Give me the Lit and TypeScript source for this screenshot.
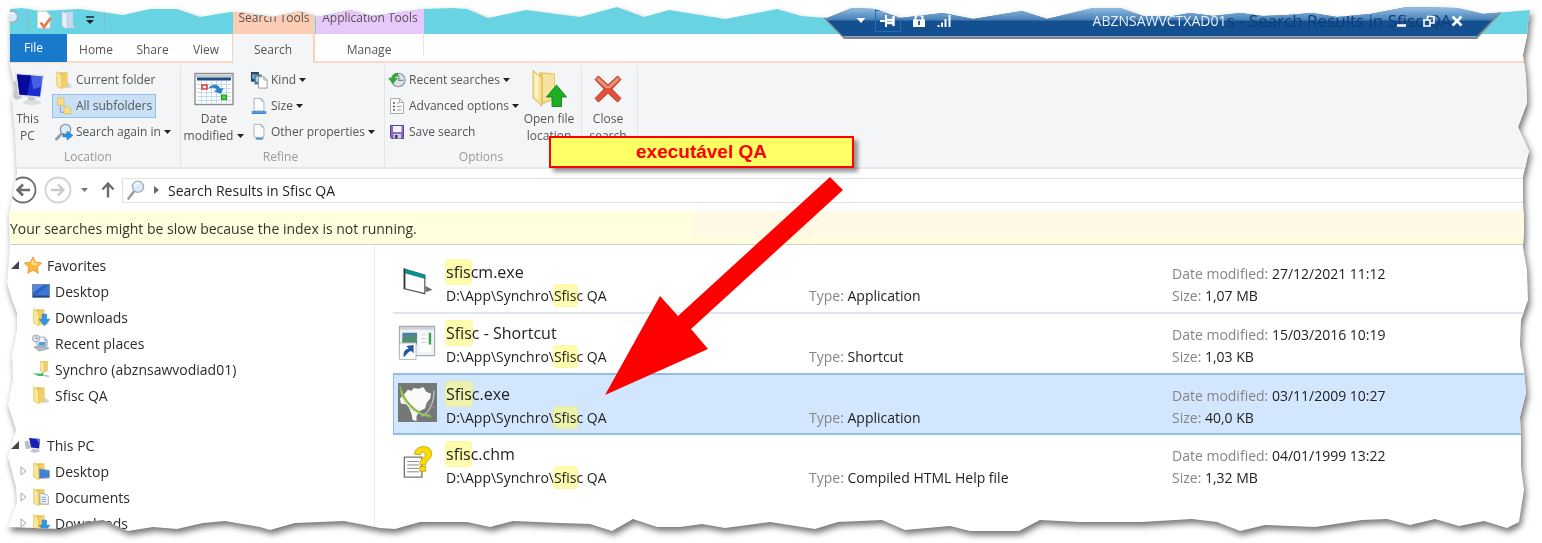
import { LitElement, html, svg, css, unsafeCSS } from "lit";
import { customElement, property } from "lit/decorators.js";
import { classMap } from "lit/directives/class-map.js";

/* Outline of the torn sheet, clockwise from the top left corner. */
const TEAR: Array<[number, number]> = [
  [10, 9], [22, 8], [40, 11], [80, 9], [123, 15], [150, 9], [177, 9], [200, 17], [230, 12], [240, 12],
  [273, 17], [300, 11], [317, 17], [350, 10], [372, 16], [423, 9], [452, 8], [467, 9], [488, 18], [526, 10],
  [580, 17], [617, 7], [644, 17], [669, 10], [725, 19], [777, 9], [801, 16], [827, 18], [852, 8], [875, 9],
  [900, 18], [943, 13], [973, 19], [1022, 11], [1047, 19], [1093, 8], [1120, 8], [1143, 16], [1173, 16],
  [1190, 13], [1213, 16], [1240, 13], [1263, 16], [1287, 15], [1312, 13], [1337, 17], [1370, 14], [1407, 7],
  [1457, 8], [1483, 14], [1530, 10], [1528, 23], [1527, 37], [1523, 55], [1526, 77], [1527, 103], [1518, 127],
  [1529, 151], [1523, 177], [1523, 200], [1524, 227], [1523, 247], [1527, 270], [1528, 300], [1521, 320],
  [1520, 345], [1524, 370], [1526, 393], [1520, 417], [1521, 437], [1521, 467], [1524, 490], [1519, 522],
  [1507, 528], [1484, 521], [1459, 526], [1435, 519], [1410, 525], [1387, 519], [1362, 520], [1315, 527],
  [1265, 525], [1240, 531], [1217, 522], [1192, 519], [1142, 522], [1080, 522], [1040, 520], [1019, 531],
  [970, 531], [950, 526], [905, 530], [882, 520], [838, 522], [815, 529], [770, 522], [725, 528], [702, 524],
  [680, 527], [657, 527], [633, 519], [612, 531], [590, 524], [560, 523], [513, 521], [490, 527], [467, 522],
  [420, 522], [395, 529], [380, 528], [344, 521], [295, 523], [270, 530], [260, 527], [225, 521], [203, 523],
  [177, 529], [153, 527], [128, 531], [103, 520], [87, 522], [60, 529], [8, 527], [17, 503], [16, 487],
  [8, 457], [16, 430], [8, 405], [13, 380], [12, 355], [17, 330], [17, 313], [12, 300], [7, 283], [10, 245],
  [9, 215], [15, 185], [17, 173], [15, 133], [12, 97], [15, 90], [10, 63],
];
const W = 1542;
const H = 543;
const tearX = (x: number) =>
  x < 50 ? `${x}px` : x > 1500 ? `calc(100% - ${W - x}px)` : `${((x / W) * 100).toFixed(2)}%`;
const tearY = (y: number) =>
  y < 50 ? `${y}px` : y > 500 ? `calc(100% - ${H - y}px)` : `${((y / H) * 100).toFixed(2)}%`;
const tearPath = unsafeCSS(`polygon(${TEAR.map(([x, y]) => `${tearX(x)} ${tearY(y)}`).join(",")})`);

const folder = svg`
  <path d="M3 1h8v12l-5 1z" fill="#e9c45a"/>
  <path d="M11 9.500l4 3.500v1.500l-6 1z" fill="#c9ced6" opacity=".8"/>
  <path d="M11 1.500v12.500l-5 1.500V4z" fill="#f0d069"/>
  <path d="M1.500 .5l4.500 3.500V15.700L1.500 13.500z" fill="#fbe698" stroke="#dfb94e" stroke-width=".6"/>`;

const ICONS: Record<string, { box: string; art: unknown }> = {
  folder: { box: "0 0 16 16", art: folder },
  subfolders: {
    box: "0 0 16 20",
    art: svg`<path d="M4 9v8h5M4 13" fill="none" stroke="#8d99a8"/>
      <path d="M1 1h5l2 1.500v7l-7-.5z" fill="#f8e08a" stroke="#d9b64e" stroke-width=".8"/>
      <path d="M8 11h5l2.500 1.500v6.500L8 18.500z" fill="#f8e08a" stroke="#d9b64e" stroke-width=".8"/>`,
  },
  searchAgain: {
    box: "0 0 18 18",
    art: svg`<path d="M1.500 16l5-5" stroke="#9a9fa6" stroke-width="3" stroke-linecap="round"/>
      <circle cx="10.500" cy="6.500" r="5.200" fill="#dcebf8" stroke="#8a97a6" stroke-width="1.300"/>
      <path d="M8 11h4V8l6 4.500-6 4.500v-3H8z" fill="#2f8fe0" stroke="#1565b5" stroke-width=".5"/>`,
  },
  thisPc: {
    box: "0 0 34 34",
    art: svg`<path d="M1 11l5-3 5 18-6 2-3-3z" fill="#c4c8cd"/>
      <path d="M4 1l29 2-3 23-23-2z" fill="#d9dcdf"/><path d="M6 2.500l25.500 2-2.500 20-20.500-2z" fill="#1a2bd0"/>
      <path d="M6 2.500l14 1-4 19.700-7.500-.7z" fill="#060a9c"/><path d="M20 3.600l11.500.9-1.200 10-8 3z" fill="#5a78ea" opacity=".7"/>
      <path d="M17 25l7 .5v3l5 1.500-8 3-9-2 5-3z" fill="#c2c6ca"/><ellipse cx="21" cy="30.500" rx="9" ry="2.500" fill="#dcdee0"/>`,
  },
  calendar: {
    box: "0 0 40 34",
    art: svg`<rect x="1" y="1.500" width="38" height="31" fill="#fff" stroke="#8b8d90" stroke-width="1.400"/>
      <path d="M2 2.500h36v3H2z" fill="#c8cacc"/><path d="M3 5.500h34v3H3z" fill="#1f4e86"/>
      <path d="M3 12.500h34M3 16.500h34M3 20.500h34M3 24.500h34M3 28.500h34M7.500 9v22M12.500 9v22M17.500 9v22M22.500 9v22M27.500 9v22M32.500 9v22" stroke="#bcd6ee" stroke-width=".9"/>
      <path d="M8 13h5v4H8z" fill="#fff" stroke="#dd3b34" stroke-width="1.600"/>
      <path d="M15 16c5-5 10-3 11 1l3-.5-2.500 5-6-2.500 3-1c-2-3-5-3-8.500-2z" fill="#2a86cc" stroke="#12619f" stroke-width=".5"/>
      <path d="M27.500 23h5v4.500h-5z" fill="#52d03c" stroke="#1f9a1c" stroke-width="1.200"/>`,
  },
  kind: {
    box: "0 0 20 20",
    art: svg`<path d="M1 1h9v11H1z" fill="#3c4652"/><path d="M2.500 3.500h6v5h-6z" fill="#63b4e8"/>
      <path d="M5 4h8v11H5z" fill="#4c7ba0"/><path d="M6.500 6h5v6h-5z" fill="#9fd5e8"/>
      <path d="M9.500 6.500h6l3.500 3.500v9H9.500z" fill="#fff" stroke="#8f959c"/><path d="M15.500 6.500V10H19" fill="none" stroke="#8f959c"/>`,
  },
  size: {
    box: "0 0 18 20",
    art: svg`<path d="M3.500 1.500h8l3 3v11h-11z" fill="#fcfcfd" stroke="#a5aab0"/><path d="M11.500 1.500v3h3" fill="none" stroke="#a5aab0"/>
      <path d="M1 15.500h16v3.500H1z" fill="#3b86d4"/><path d="M3 16v1.500M6 16v1.500M9 16v1.500M12 16v1.500M15 16v1.500" stroke="#d7e9fa" stroke-width=".8"/>`,
  },
  props: {
    box: "0 0 18 20",
    art: svg`<path d="M4 14h11l-2 4.500H6z" fill="#4d97d1"/>
      <path d="M3.500 1.500h8l3 3v10.500l-2 1h-7l-2-1z" fill="#fcfcfd" stroke="#a5aab0"/><path d="M11.500 1.500v3h3" fill="none" stroke="#a5aab0"/>`,
  },
  recent: {
    box: "0 0 20 18",
    art: svg`<circle cx="11.500" cy="9" r="7.500" fill="#dde4ea" stroke="#8e98a3" stroke-width="1.300"/>
      <path d="M12 4v5.500h5" fill="none" stroke="#7d8894" stroke-width="1.300"/>
      <path d="M11 1.500C7 1.500 4.500 4 4 7H.5l5 6 5-6H7c.5-1.500 2-2.500 4-2.500z" fill="#2fae2a" stroke="#15871a" stroke-width=".5"/>`,
  },
  advanced: {
    box: "0 0 16 18",
    art: svg`<path d="M1.500 1.500h9l4 4v11h-13z" fill="#fbfbfc" stroke="#a9adb2"/><path d="M10.500 1.500v4h4" fill="none" stroke="#a9adb2"/>
      <path d="M4 6h2M4 9.500h2M4 13h2" stroke="#555b62" stroke-width="1.400"/><path d="M8 6h2M8 9.500h4.500M8 13h4.500" stroke="#9aa0a7"/>`,
  },
  save: {
    box: "-1 -1 18 18",
    art: svg`<path d="M1.500 1.500h13v13h-12l-1-1z" fill="#8a6dbd" stroke="#5a4290"/><path d="M4 2h8.500v6H4z" fill="#f4f2f9"/>
      <path d="M4.500 10h7.500v4.500H4.500z" fill="#cfd0d6"/><path d="M6 11h2.500v3.500H6z" fill="#41355f"/>`,
  },
  openFile: {
    box: "0 0 36 40",
    art: svg`<path d="M8 3l16 1.500V30L10 36z" fill="#e9c869"/><path d="M12 5l11 .5V29l-11 4z" fill="#f7e3a0"/>
      <path d="M2 1.500l9 7.500v28L2 29z" fill="#f6df8f" stroke="#d3ab4b" stroke-width=".8"/><path d="M3.500 4l4 3v24l-4-3z" fill="#fdf3c8"/>
      <path d="M25.500 16L35.500 28h-5v9.500h-9.500V28h-5.500z" fill="#1eae22" stroke="#0d8413" stroke-width=".9"/>`,
  },
  close: {
    box: "0 0 30 30",
    art: svg`<path d="M2 5.500L5.500 2l9.500 9L24.500 2 28 5.500 18.800 15 28 24.500 24.500 28 15 19 5.500 28 2 24.500 11.200 15z" fill="#e2523a" stroke="#b8402c" stroke-width="1"/>
      <path d="M3.500 5.500L5.500 3.500l9.500 9 9.500-9 2 2L17 14h-4z" fill="#f0917c"/>`,
  },
  back: {
    box: "0 0 28 28",
    art: svg`<circle cx="14" cy="14" r="12.500" fill="#fff" stroke="#6e6e6e" stroke-width="1.800"/>
      <path d="M21 14H8.500M14 8.500L8.500 14l5.500 5.500" fill="none" stroke="#6a6a6a" stroke-width="2.600"/>`,
  },
  forward: {
    box: "0 0 28 28",
    art: svg`<circle cx="14" cy="14" r="12.500" fill="#fff" stroke="#d2d2d2" stroke-width="1.800"/>
      <path d="M7 14h12.500M14 8.500l5.500 5.500-5.500 5.500" fill="none" stroke="#cacaca" stroke-width="2.400"/>`,
  },
  up: {
    box: "0 0 14 18",
    art: svg`<path d="M7 16.500V3M1.500 8.500L7 2.500l5.500 6" fill="none" stroke="#6c6c6c" stroke-width="2.400"/>`,
  },
  lens: {
    box: "0 0 18 20",
    art: svg`<path d="M1.500 18.500L6.500 12" stroke="#9b9b9b" stroke-width="2.600" stroke-linecap="round"/>
      <circle cx="11" cy="6.800" r="5.600" fill="#d9ecfb" stroke="#a3abb4" stroke-width="1.300"/><path d="M7.500 6.500a3.600 3.600 0 0 1 5-3" stroke="#fff" stroke-width="1.500" fill="none"/>`,
  },
  star: {
    box: "0 0 18 18",
    art: svg`<path d="M9 .8l2.600 5.500 6 .7-4.400 4.200 1.100 6L9 14.300 3.700 17.200l1.100-6L.4 7l6-.7z" fill="#fdb73a" stroke="#ea9320" stroke-width=".8"/>
      <path d="M9 3l1.600 4 4.400.5-3.500 2L7 8z" fill="#ffdf8f"/>`,
  },
  desktop: {
    box: "0 0 18 16",
    art: svg`<path d="M.5 1.500h17v13H.5z" fill="#3a78d8" stroke="#7488a0"/><path d="M1 2h16L4 12H1z" fill="#2b62c4"/>
      <path d="M1 2h10L1 10z" fill="#4d8ae4"/><path d="M1 12.500h16v1.500H1z" fill="#1c4680"/>`,
  },
  downloads: {
    box: "0 0 16 16",
    art: svg`${folder}<path d="M9 5.500h4V10h3l-5 5.800L6.500 10H9z" fill="#2e97e4" stroke="#1b70bb" stroke-width=".5"/>`,
  },
  places: {
    box: "0 0 18 18",
    art: svg`<path d="M4 3h9l1 9-9 1z" fill="#eef3f8" stroke="#98a4b0" stroke-width=".8"/><circle cx="4" cy="4.500" r="3.500" fill="#dfe7ee" stroke="#94a0ac" stroke-width=".9"/>
      <path d="M4 2.500v2h2" stroke="#6d7985" stroke-width=".8" fill="none"/><path d="M7 8h6v3.500H6z" fill="#4f9bd4"/>
      <path d="M2 13l11-1 4 2.500-10 2.500z" fill="#b3bcc5" stroke="#7c8894" stroke-width=".6"/><path d="M12 5l3 1v6" stroke="#8793a0" fill="none"/>`,
  },
  network: {
    box: "0 0 18 18",
    art: svg`<path d="M9 1h7v10l-4 1.500z" fill="#edcf6c"/><path d="M8.500 1l3.500 2.500v9L8.500 11z" fill="#fbe9a4" stroke="#d9b24c" stroke-width=".5"/>
      <path d="M1 14c4 1 8 1 10-2v4H7z" fill="#27b24a"/><path d="M0 13.500h8l4 2.500H9z" fill="#3dbf5c"/><path d="M11 15l6 1.500" stroke="#b5bcc4" stroke-width="1.600"/>`,
  },
  pcSmall: {
    box: "0 0 18 16",
    art: svg`<path d="M.5 4.500L4 3.500l3 8-5 .5z" fill="#b7bdc4"/><path d="M5 1l11 1-.8 9.500L7 10.500z" fill="#1a1fb4"/><path d="M12 1.600l4 .4-.4 5z" fill="#5577e0"/>
      <path d="M9 11.500l4 .5 4 2-6 2-5-1.500z" fill="#c3c8cd"/>`,
  },
  deskFolder: {
    box: "0 0 16 16",
    art: svg`${folder}<path d="M6.500 6l9 1.500v6.500l-9 .5z" fill="#3f80d2" stroke="#8499b5" stroke-width=".6"/>`,
  },
  docFolder: {
    box: "0 0 16 16",
    art: svg`${folder}<path d="M7 4.500l6 1.500 1.500 1.500v7l-7.500-.5z" fill="#f1f5fa" stroke="#8f9cab" stroke-width=".7"/><path d="M8.500 8l4 .5M8.500 10l4 .3M8.500 12h4" stroke="#7ba2cb" stroke-width=".8"/>`,
  },
  appWindow: {
    box: "0 0 40 40",
    art: svg`<path d="M7 7.500l20.500 6v19L7 27.500z" fill="#fff" stroke="#555" stroke-width="1.200"/>
      <path d="M7 7l21 6v4.500L7 11.500z" fill="#0d8e8b"/><path d="M6.500 6.500v21.500" stroke="#333" stroke-width="1.600"/>
      <path d="M28 24.500l7.500 4-7 2.500z" fill="#6c6c6c"/>`,
  },
  shortcut: {
    box: "0 0 40 40",
    art: svg`<path d="M1.500 3.500h36v30h-36z" fill="#f0f2f4" stroke="#a4aab0" stroke-width="1.200"/><path d="M2 4h35v3H2z" fill="#cfd3d7"/>
      <path d="M4.500 10h15v12h-15z" fill="#4a7faa"/><path d="M4.500 15l7-3 8 1v9h-15z" fill="#4e8d73"/>
      <path d="M22 10h12v20H22z" fill="#fff"/><path d="M31.500 10h2.500v12h-2.500z" fill="#37a24f"/><path d="M24 12h5M24 16h5M24 20h5" stroke="#c3c9cf"/>
      <path d="M1.500 20.500h17v17h-17z" fill="#fff" stroke="#b4b9be"/><path d="M6 35c-1-5 1-8 5-8.500L8.500 23.500l7.500-1 0 8.500-2.500-2.200C10 29.500 9.500 32 6 35z" fill="#1e55a5"/>`,
  },
  brazil: {
    box: "0 0 40 40",
    art: svg`<path d="M0 0h40v40H0z" fill="#757779"/>
      <path d="M24 34c8-3 13-14 13-26" fill="none" stroke="#b4b8bb" stroke-width="1.600"/><path d="M38 26c-8-6-22-10-34-10" fill="none" stroke="#9da0a3" stroke-width=".8"/>
      <path d="M6 12l4-5 4 1 2-3 5 1 5-2 3 5 5 2-1 5-4 5-1 5-6 3-3 5 0 5-4-1-1-6-2-5-3-5-6-1-1-5z" fill="#fafafa"/>
      <path d="M2 3c3 12 10 26 32 32" fill="none" stroke="#7fba3c" stroke-width="2"/><path d="M3 8c1 13 14 26 30 25" fill="none" stroke="#b4d56a" stroke-width="1"/>`,
  },
  help: {
    box: "0 0 40 40",
    art: svg`<path d="M6.500 13.500h18v20.500h-18z" fill="#fdfdfd" stroke="#767676" stroke-width="1.400"/>
      <path d="M9.500 18h12M9.500 21.500h12M9.500 25h12M9.500 28.500h12" stroke="#888" stroke-width="1"/>
      <path d="M17 10.500c0-10 18-11 17.500 0C34 17 28.500 16 28.500 21.500h-6C22.500 14 28 14 28 10.500c0-3-5-3-5 .5z" fill="#fbdc0a" stroke="#b59a00" stroke-width=".8"/>
      <path d="M22.500 23h6v5h-6z" fill="#fbdc0a" stroke="#b59a00" stroke-width=".8"/>`,
  },
  check: {
    box: "0 0 16 20",
    art: svg`<path d="M1.500 1.500h9l3.500 4v12.500H1.500z" fill="#fff" stroke="#d8d4d0"/><path d="M4.500 12.500l3.500 4.500 6.500-9" fill="none" stroke="#e87a45" stroke-width="2.800"/>`,
  },
  blankFolder: {
    box: "0 0 14 20",
    art: svg`<path d="M4 2h8v13l2 3H4z" fill="#c9d6ec"/><path d="M1 1l5 3v15l-5-3z" fill="#e9eff9" stroke="#b4c3dc" stroke-width=".6"/>`,
  },
  pin: {
    box: "0 0 16 14",
    art: svg`<path d="M0 7h6" stroke="#fff" stroke-width="1.800"/><path d="M6 1v12" stroke="#fff" stroke-width="2"/><path d="M6 6h7v3H6M13.500 2v10" fill="none" stroke="#fff" stroke-width="2.400"/>`,
  },
  lock: {
    box: "0 0 14 14",
    art: svg`<path d="M3.500 6V3.500a3.500 2.500 0 0 1 7 0V6" fill="none" stroke="#fff" stroke-width="2"/><path d="M1 5.500h12V13H1z" fill="#fff"/><path d="M7 7v4" stroke="#14508f" stroke-width="1.800"/>`,
  },
  signal: {
    box: "0 0 14 14",
    art: svg`<path d="M1.500 11v2M5 8.500V13M8.500 5v8M12.500 1v12" stroke="#fff" stroke-width="2"/>`,
  },
};

const icon = (name: string, cls = "") =>
  html`<svg class="icon ${cls}" viewBox=${ICONS[name].box} aria-hidden="true">${ICONS[name].art}</svg>`;
const caret = html`<svg class="caret" viewBox="0 0 7 4" aria-hidden="true"><path d="M0 0h7L3.500 4z" /></svg>`;

@customElement("file-tile")
class FileTile extends LitElement {
  @property() icon = "";
  @property() hit = "";
  @property() rest = "";
  @property() type = "";
  @property() date = "";
  @property() size = "";
  @property({ type: Boolean, reflect: true }) selected = false;

  static styles = css`
    :host {
      display: grid;
      grid-template-columns: 53px repeat(3, 1fr);
      height: 61px;
      box-sizing: border-box;
      border-bottom: 2px solid #dbe6ef;
      color: #222;
      font-size: 14px;
      line-height: 22px;
    }
    :host([plain]) { border-color: transparent; }
    :host([selected]) {
      height: 62px;
      margin-top: -2px;
      background: #d2e7fd;
      border: solid #8fbde8;
      border-width: 2px 0 2px 1px;
      grid-template-columns: 52px repeat(3, 1fr);
    }
    .icon { width: 39px; height: 39px; margin: 9px 0 0 5px; }
    :host([selected]) .icon { margin: 8px 0 0 4px; }
    .cell { display: flex; flex-direction: column; padding-top: 10px; white-space: nowrap; }
    .cell.name { padding-top: 6px; }
    .cell.type { padding-top: 32px; }
    .title { font-size: 16px; line-height: 26px; }
    .label { color: #858585; }
    mark {
      color: inherit;
      background: rgba(255, 250, 120, 0.6);
      border-radius: 3px;
      box-shadow: 0 0 0 1px rgba(250, 240, 90, 0.55);
      padding: 1px 0;
    }
  `;

  render() {
    return html`
      <svg class="icon" viewBox="0 0 40 40" aria-hidden="true">${ICONS[this.icon].art}</svg>
      <div class="cell name">
        <span class="title"><mark>${this.hit}</mark>${this.rest}</span>
        <span>D:\\App\\Synchro\\<mark>Sfis</mark>c QA</span>
      </div>
      <div class="cell type"><span><span class="label">Type:</span> ${this.type}</span></div>
      <div class="cell">
        <span><span class="label">Date modified:</span> ${this.date}</span>
        <span><span class="label">Size:</span> ${this.size}</span>
      </div>
    `;
  }
}

@customElement("app-root")
class AppRoot extends LitElement {
  static styles = css`
    :host {
      display: block;
      position: relative;
      height: 100vh;
      overflow: hidden;
      background: #fff;
      font-family: "Open Sans", "Noto Sans", sans-serif;
      font-size: 14px;
      color: #222;
    }
    button { font: inherit; color: inherit; background: none; border: 0; padding: 0; margin: 0; white-space: nowrap; }
    a { color: inherit; text-decoration: none; }
    .shade { height: 100%; filter: drop-shadow(2px 4px 3px rgba(0, 0, 0, 0.55)); }
    .sheet { position: relative; display: flex; flex-direction: column; height: 100%; background: #fff; clip-path: ${tearPath}; }
    .icon { flex: none; width: 16px; height: 16px; }
    .caret { flex: none; width: 7px; height: 4px; fill: #222; }

    .titlebar { display: flex; flex: none; height: 34px; background: #68d3e2; font-size: 12px; color: #5a5350; }
    .quick { display: flex; align-items: center; gap: 8px; width: 233px; box-sizing: border-box; padding: 6px 0 0 1px; }
    .quick .tall { height: 20px; }
    .quick .wide { width: 18px; height: 20px; }
    .rule { width: 1px; height: 16px; background: #8fb6bc; }
    .more { width: 8px; height: 8px; margin: 0 2px; }
    .context { width: 82px; padding-top: 9px; line-height: 18px; text-align: center; white-space: nowrap; background: #fbcdb5; }
    .context.app { width: 108px; margin-left: 1px; background: #e7c8fb; }

    .tabs { display: flex; flex: none; height: 27px; border-bottom: 2px solid #fcd9c5; font-size: 12px; color: #555; }
    .tabs button { line-height: 32px; }
    .tabs .file { width: 67px; line-height: 28px; background: #1979ca; color: #fff; height: 28px; }
    .home { width: 58px; } .share { width: 55px; } .view { width: 52px; }
    .tabs .search { box-sizing: border-box; width: 83px; height: 29px; background: #f4f5f7; border: solid #fcd0b8; border-width: 0 2px 0 1px; }
    .tabs .manage { box-sizing: border-box; width: 109px; border-right: 1px solid #e6e6e6; height: 22px; }

    .ribbon { display: flex; flex: none; height: 104px; background: #f4f5f7; border-bottom: 2px solid #e6e7e8; font-size: 12px; color: #555; }
    .group { display: flex; flex: none; flex-direction: column; box-sizing: border-box; border-right: 1px solid #e4e5e7; margin-top: 2px; }
    .location { width: 181px; } .refine { width: 204px; } .options { width: 197px; } .shut { width: 56px; }
    .tools { display: flex; flex: none; height: 82px; padding-top: 3px; box-sizing: border-box; }
    .caption { flex: none; text-align: center; color: #9a9a9a; line-height: 20px; padding-right: 4px; }
    .stack { display: flex; flex-direction: column; align-items: flex-start; gap: 2px; }
    .stack button { display: flex; align-items: center; gap: 3px; height: 24px; line-height: 24px; padding: 0 3px 0 2px; border: 1px solid transparent; box-sizing: border-box; }
    .stack .on { background: #c9e0f7; border-color: #92c0e8; }
    .stack .icon { width: 18px; height: 18px; }
    .big { display: flex; flex: none; flex-direction: column; align-items: center; text-align: center; line-height: 17px; }
    .big .pic { height: 42px; display: flex; align-items: center; }
    .big .line { display: flex; align-items: center; gap: 4px; }
    .pc { width: 52px; padding-left: 3px; box-sizing: border-box; }
    .date { width: 66px; }
    .options .stack { width: 134px; }
    .open { width: 60px; }
    .quit { width: 52px; }
    .i34 { width: 34px; height: 34px; } .i36 { width: 36px; height: 40px; } .i40 { width: 40px; height: 34px; } .i30 { width: 30px; height: 30px; }

    .nav { display: flex; align-items: center; height: 42px; flex: none; }
    .round { width: 28px; height: 28px; margin-left: 7px; }
    .round.first { margin-left: 9px; }
    .nav .caret { margin-left: 9px; fill: #777; }
    .up { width: 14px; height: 18px; margin-left: 13px; }
    .address { display: flex; align-items: center; flex: 1; height: 25px; margin-left: 7px; border: 1px solid #e0e0e0; box-sizing: border-box; padding-left: 4px; }
    .address .icon { width: 18px; height: 20px; }
    .chevron { width: 5px; height: 8px; margin: 0 9px; fill: #666; }

    .notice {
      flex: none;
      height: 33px;
      line-height: 35px;
      margin: 0;
      padding-left: 10px;
      border-bottom: 1px solid #cfcfc4;
      color: #333;
      background: linear-gradient(#fff9e6, #fff9e6) right top / 55% 26px no-repeat #ffffde;
    }

    .body { display: flex; flex: 1; min-height: 0; overflow: hidden; }
    .tree { flex: none; width: 375px; box-sizing: border-box; padding: 7px 0 0; margin: 0; border-right: 1px solid #ececec; color: #2b2b2b; }
    .tree ul { list-style: none; margin: 0 0 24px; padding: 0; }
    .tree a { display: flex; align-items: center; height: 26px; padding-left: 32px; gap: 5px; white-space: nowrap; }
    .tree a.root { padding-left: 11px; }
    .tree a.closed { padding-left: 20px; }
    .tree .icon { width: 18px; height: 18px; }
    .twist { width: 8px; height: 8px; fill: #444; }
    .twist.hollow { width: 7px; height: 10px; fill: #fff; stroke: #a6a6a6; }

    .files { flex: 1; min-width: 0; padding: 8px 7px 0 18px; }

    .remote {
      position: absolute;
      top: 0;
      left: 806px;
      right: 29px;
      height: 39px;
      background: #85868a;
      clip-path: polygon(0 0, 100% 0, calc(100% - 36px) 100%, 38px 100%);
      color: #fff;
    }
    .face {
      display: grid;
      grid-template-columns: 1fr auto 1fr;
      height: 37px;
      box-sizing: border-box;
      padding-top: 5px;
      align-items: center;
      border-bottom: 1px solid #88a9d0;
      background: linear-gradient(#8fbce2 0, #8fbce2 8px, #477fb6 20px, #14508f 21px, #14508f 100%);
      clip-path: polygon(1px 0, calc(100% - 1px) 0, calc(100% - 37px) 100%, 38px 100%);
    }
    .left { display: flex; align-items: center; gap: 11px; padding-left: 50px; }
    .left .caret { width: 10px; height: 5px; fill: #fff; margin-right: -2px; }
    .left .pinbox { display: flex; align-items: center; justify-content: center; width: 26px; height: 22px; border: 1px solid #1d6cc0; box-sizing: border-box; }
    .left .icon { width: 14px; height: 14px; }
    .left .pinbox .icon { width: 16px; }
    .host { font-size: 14px; color: #e6eef7; }
    .right { display: flex; align-items: center; justify-content: space-between; padding-right: 50px; }
    .ghost { font-size: 17px; color: #0d3c78; white-space: pre; width: 0; }
    .win { display: flex; gap: 16px; }
    .win svg { width: 12px; height: 12px; fill: none; stroke: #fff; stroke-width: 2; }

    .arrow { position: absolute; left: 600px; top: 170px; width: 250px; height: 230px; }
    .callout {
      position: absolute;
      left: 549px;
      top: 136px;
      width: 305px;
      height: 32px;
      box-sizing: border-box;
      border: 2px solid #f00;
      background: #ff6;
      box-shadow: 4px 4px 4px rgba(0, 0, 0, 0.4);
      color: #f00;
      font: bold 19px/28px "Liberation Sans", Arial, sans-serif;
      text-align: center;
    }
  `;

  private tool(name: string, label: string, drop = false, on = false) {
    return html`<button class=${classMap({ on })}>${icon(name)}<span>${label}</span>${drop ? caret : ""}</button>`;
  }

  private leaf(name: string, label: string, closed = false) {
    return html`<li>
      <a href="#" class=${classMap({ closed })}>
        ${closed ? html`<svg class="twist hollow" viewBox="0 0 7 10"><path d="M1 1l5 4-5 4z" /></svg>` : ""}${icon(name)}<span>${label}</span>
      </a>
    </li>`;
  }

  private root(name: string, label: string) {
    return html`<li>
      <a href="#" class="root"><svg class="twist" viewBox="0 0 8 8"><path d="M8 0v8H0z" /></svg>${icon(name)}<span>${label}</span></a>
    </li>`;
  }

  render() {
    return html`
      <div class="shade">
        <div class="sheet">
          <header class="titlebar">
            <div class="quick">
              ${icon("lens", "wide")}
              <span class="rule"></span>
              ${icon("check", "tall")}${icon("blankFolder", "tall")}
              <svg class="more" viewBox="0 0 8 8"><path d="M0 1h8" stroke="#222" stroke-width="1.500" /><path d="M0 4h8L4 8z" fill="#222" /></svg>
              <span class="rule"></span>
            </div>
            <div class="context">Search Tools</div>
            <div class="context app">Application Tools</div>
          </header>

          <nav class="tabs" aria-label="Ribbon tabs">
            <button class="file">File</button>
            <button class="home">Home</button>
            <button class="share">Share</button>
            <button class="view">View</button>
            <button class="search">Search</button>
            <button class="manage">Manage</button>
          </nav>

          <section class="ribbon">
            <div class="group location">
              <div class="tools">
                <button class="big pc"><span class="pic">${icon("thisPc", "i34")}</span><span>This</span><span>PC</span></button>
                <div class="stack">
                  ${this.tool("folder", "Current folder")} ${this.tool("subfolders", "All subfolders", false, true)}
                  ${this.tool("searchAgain", "Search again in", true)}
                </div>
              </div>
              <div class="caption">Location</div>
            </div>
            <div class="group refine">
              <div class="tools">
                <button class="big date">
                  <span class="pic">${icon("calendar", "i40")}</span><span>Date</span><span class="line">modified ${caret}</span>
                </button>
                <div class="stack">
                  ${this.tool("kind", "Kind", true)} ${this.tool("size", "Size", true)} ${this.tool("props", "Other properties", true)}
                </div>
              </div>
              <div class="caption">Refine</div>
            </div>
            <div class="group options">
              <div class="tools">
                <div class="stack">
                  ${this.tool("recent", "Recent searches", true)} ${this.tool("advanced", "Advanced options", true)}
                  ${this.tool("save", "Save search")}
                </div>
                <button class="big open"><span class="pic">${icon("openFile", "i36")}</span><span>Open file</span><span>location</span></button>
              </div>
              <div class="caption">Options</div>
            </div>
            <div class="group shut">
              <div class="tools">
                <button class="big quit"><span class="pic">${icon("close", "i30")}</span><span>Close</span><span>search</span></button>
              </div>
            </div>
          </section>

          <div class="nav">
            ${icon("back", "round first")} ${icon("forward", "round")} ${caret} ${icon("up", "up")}
            <div class="address">
              ${icon("lens")}<svg class="chevron" viewBox="0 0 5 8"><path d="M0 0l5 4-5 4z" /></svg>
              <button>Search Results in Sfisc QA</button>
            </div>
          </div>

          <p class="notice">Your searches might be slow because the index is not running.</p>

          <div class="body">
            <nav class="tree" aria-label="Folders">
              <ul>
                ${this.root("star", "Favorites")} ${this.leaf("desktop", "Desktop")} ${this.leaf("downloads", "Downloads")}
                ${this.leaf("places", "Recent places")} ${this.leaf("network", "Synchro (abznsawvodiad01)")}
                ${this.leaf("folder", "Sfisc QA")}
              </ul>
              <ul>
                ${this.root("pcSmall", "This PC")} ${this.leaf("deskFolder", "Desktop", true)}
                ${this.leaf("docFolder", "Documents", true)} ${this.leaf("downloads", "Downloads", true)}
              </ul>
            </nav>
            <main class="files">
              <file-tile icon="appWindow" hit="sfis" rest="cm.exe" type="Application" date="27/12/2021 11:12" size="1,07 MB"></file-tile>
              <file-tile icon="shortcut" hit="Sfis" rest="c - Shortcut" type="Shortcut" date="15/03/2016 10:19" size="1,03 KB"></file-tile>
              <file-tile icon="brazil" hit="Sfis" rest="c.exe" type="Application" date="03/11/2009 10:27" size="40,0 KB" selected></file-tile>
              <file-tile icon="help" hit="sfis" rest="c.chm" type="Compiled HTML Help file" date="04/01/1999 13:22" size="1,32 MB" plain></file-tile>
            </main>
          </div>

          <div class="remote">
            <div class="face">
              <div class="left">${caret}<span class="pinbox">${icon("pin")}</span>${icon("lock")}${icon("signal")}</div>
              <div class="host">ABZNSAWVCTXAD01</div>
              <div class="right">
                <span class="ghost">s - Search Results in Sfisc QA</span>
                <span class="win">
                  <svg viewBox="0 0 12 12"><path d="M2 10.500h9" stroke-width="2.500" /></svg>
                  <svg viewBox="0 0 12 12"><path d="M1 5h6v6H1zM4.500 5V1.500H11V8H7" stroke-width="1.600" /></svg>
                  <svg viewBox="0 0 12 12"><path d="M1.500 1.500l9 9M10.500 1.500l-9 9" stroke-width="2.600" /></svg>
                </span>
              </div>
            </div>
          </div>
        </div>
      </div>
      <svg class="arrow" viewBox="0 0 250 230" aria-hidden="true">
        <path d="M230 7L243 20 91 159 108 179 5 225 60 126 78 146z" fill="#f00" />
      </svg>
      <div class="callout">executável QA</div>
    `;
  }
}
